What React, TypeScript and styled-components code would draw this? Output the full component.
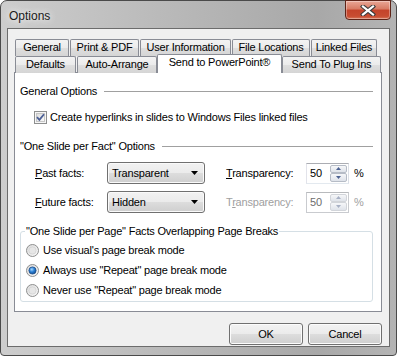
import React from 'react';
import styled, { createGlobalStyle } from 'styled-components';

const GlobalStyle = createGlobalStyle`
  html, body {
    margin: 0;
    padding: 0;
    background: #ffffff;
  }
  body {
    font-family: "Liberation Sans", Arial, sans-serif;
    font-size: 11px;
    letter-spacing: -0.2px;
    color: #000000;
  }
`;

const Window = styled.div`
  width: 397px;
  height: 356px;
  box-sizing: border-box;
  border: 1px solid #4a4a4a;
  border-radius: 7px 7px 4px 4px;
  background: linear-gradient(to right, #cdcdcd 0%, #bababa 40%, #a8a8a8 80%, #b4b4b4 100%);
  display: flex;
  flex-direction: column;
  padding: 0 6px 8px 6px;
`;

const TitleBar = styled.div`
  height: 27px;
  display: flex;
  justify-content: space-between;
  align-items: flex-start;
`;

const Title = styled.div`
  font-size: 12px;
  letter-spacing: 0;
  color: #1a1a1a;
  margin: 8px 0 0 2px;
  text-shadow: 0 0 6px rgba(255, 255, 255, 0.95), 0 0 12px rgba(255, 255, 255, 0.7);
`;

const CloseButton = styled.div`
  width: 46px;
  height: 20px;
  margin: -1px -1px 0 0;
  box-sizing: border-box;
  border: 1px solid #5e2418;
  border-radius: 0 0 4px 4px;
  background: linear-gradient(#e9a796 0%, #d77a63 45%, #c4432a 50%, #c84c31 85%, #d8785b 100%);
  box-shadow: inset 0 0 0 1px rgba(255, 255, 255, 0.35);
  display: flex;
  align-items: center;
  justify-content: center;
`;

const Client = styled.div`
  flex: 1;
  background: #f0f0f0;
  border: 1px solid #6c6c6c;
  padding: 10px 7px 0 6px;
  display: flex;
  flex-direction: column;
`;

const TabStrip = styled.div`
  display: flex;
  flex-direction: column;
  padding-left: 1px;
`;

const TabRow = styled.div<{ $h: number }>`
  display: flex;
  gap: 1px;
  height: ${p => p.$h}px;
`;

const Tab = styled.div<{ $w: number; $active?: boolean }>`
  width: ${p => p.$w}px;
  box-sizing: border-box;
  height: ${p => (p.$active ? 19 : 17)}px;
  margin: ${p => (p.$active ? '-2px -1px 0 -1px' : '0')};
  position: relative;
  z-index: ${p => (p.$active ? 2 : 0)};
  border: 1px solid #898c95;
  border-bottom: none;
  border-radius: 2px 2px 0 0;
  background: ${p =>
    p.$active ? '#ffffff' : 'linear-gradient(#f3f3f3 0%, #ebebeb 50%, #dedede 51%, #d5d5d5 100%)'};
  text-align: center;
  line-height: ${p => (p.$active ? 14 : 15)}px;
  white-space: nowrap;
`;

const Panel = styled.div`
  height: 240px;
  box-sizing: border-box;
  border: 1px solid #898c95;
  background: #ffffff;
  padding: 11px 8px 0 0;
  display: flex;
  flex-direction: column;
`;

const SectionHeader = styled.div<{ $top: number }>`
  display: flex;
  align-items: center;
  height: 14px;
  margin-top: ${p => p.$top}px;
  padding-left: 5px;
  white-space: nowrap;

  &::after {
    content: '';
    flex: 1;
    height: 1px;
    background: #a0a0a0;
    margin-left: 7px;
  }
`;

const CheckRow = styled.label`
  display: flex;
  align-items: center;
  gap: 3px;
  height: 14px;
  margin-top: 12px;
  padding-left: 19px;
`;

const FieldGrid = styled.div`
  display: grid;
  grid-template-columns: 72px 98px 101px 43px auto;
  grid-auto-rows: 22px;
  row-gap: 7px;
  align-items: center;
  margin-top: 9px;
  padding-left: 20px;
`;

const FieldLabel = styled.span<{ $gap?: number; $disabled?: boolean }>`
  margin-left: ${p => p.$gap || 0}px;
  color: ${p => (p.$disabled ? '#a0a0a0' : '#000000')};
  white-space: nowrap;
`;

const Select = styled.div`
  height: 22px;
  box-sizing: border-box;
  border: 1px solid #707070;
  border-radius: 3px;
  background: linear-gradient(#f2f2f2 0%, #ebebeb 49%, #dddddd 50%, #cfcfcf 100%);
  box-shadow: inset 0 0 0 1px #fafafa;
  display: flex;
  align-items: center;
  justify-content: space-between;
  padding: 0 6px 0 4px;
`;

const Spin = styled.div<{ $disabled?: boolean }>`
  height: 21px;
  box-sizing: border-box;
  border: 1px solid ${p => (p.$disabled ? '#c9cbcf' : '#abadb3')};
  border-top-color: ${p => (p.$disabled ? '#b8babd' : '#abadb3')};
  border-left-color: ${p => (p.$disabled ? '#c9cbcf' : '#e2e3ea')};
  border-right-color: ${p => (p.$disabled ? '#c9cbcf' : '#dbdfe6')};
  border-bottom-color: ${p => (p.$disabled ? '#c9cbcf' : '#e3e9ef')};
  background: #ffffff;
  display: flex;
  padding: 1px;
`;

const SpinValue = styled.span<{ $disabled?: boolean }>`
  flex: 1;
  padding-left: 2px;
  line-height: 17px;
  color: ${p => (p.$disabled ? '#6d6d6d' : '#000000')};
`;

const SpinButtons = styled.div`
  width: 17px;
  display: flex;
  flex-direction: column;
`;

const SpinButton = styled.div<{ $disabled?: boolean }>`
  flex: 1;
  border: 1px solid ${p => (p.$disabled ? '#d2d5da' : '#b6bcc6')};
  border-radius: 2px;
  background: linear-gradient(#f6f7f9, #dfe3ea);
  display: flex;
  align-items: center;
  justify-content: center;
`;

const Unit = styled.span<{ $disabled?: boolean }>`
  margin-left: 5px;
  color: ${p => (p.$disabled ? '#a0a0a0' : '#000000')};
`;

const Group = styled.fieldset`
  margin: 11px 0 0 5px;
  padding: 5px 0 4px 5px;
  border: 1px solid #d5dfe5;
  border-radius: 3px;
  min-width: 0;
`;

const Legend = styled.legend`
  padding: 0 1px;
  margin-left: -1px;
  line-height: 14px;
`;

const RadioList = styled.div`
  display: flex;
  flex-direction: column;
  gap: 6px;
`;

const RadioRow = styled.label`
  display: flex;
  align-items: center;
  gap: 4px;
  height: 14px;
`;

const ButtonRow = styled.div`
  display: flex;
  justify-content: flex-end;
  gap: 5px;
  margin-top: 11px;
`;

const Button = styled.div`
  width: 74px;
  height: 22px;
  box-sizing: border-box;
  border: 1px solid #707070;
  border-radius: 3px;
  background: linear-gradient(#f2f2f2 0%, #ebebeb 49%, #dddddd 50%, #cfcfcf 100%);
  box-shadow: inset 0 0 0 1px #fcfcfc;
  display: flex;
  align-items: center;
  justify-content: center;
`;

const CloseGlyph = () => (
  <svg width="16" height="11" viewBox="0 0 16 11">
    <path d="M3 1.5 L13 9.5 M13 1.5 L3 9.5" stroke="#3b3b3b" strokeWidth="4.2" strokeLinecap="square" />
    <path d="M3 1.5 L13 9.5 M13 1.5 L3 9.5" stroke="#ffffff" strokeWidth="2.2" strokeLinecap="square" />
  </svg>
);

const CheckBox = () => (
  <svg width="13" height="13" viewBox="0 0 13 13">
    <defs>
      <linearGradient id="cbFill" x1="0" y1="0" x2="1" y2="1">
        <stop offset="0" stopColor="#dcdcdc" />
        <stop offset="1" stopColor="#fbfbfb" />
      </linearGradient>
    </defs>
    <rect x="0.5" y="0.5" width="12" height="12" fill="#f6f6f6" stroke="#8e8f8f" />
    <rect x="2.5" y="2.5" width="8" height="8" fill="url(#cbFill)" stroke="#c6c6c6" />
    <path d="M3 6.2 L5.4 8.8 L10 3.2" fill="none" stroke="#4b5f96" strokeWidth="1.8" />
  </svg>
);

const Radio = ({ checked }: { checked?: boolean }) => (
  <svg width="13" height="13" viewBox="0 0 13 13">
    <defs>
      <linearGradient id="rdOuter" x1="0" y1="0" x2="1" y2="1">
        <stop offset="0" stopColor="#d9d9d9" />
        <stop offset="1" stopColor="#fafafa" />
      </linearGradient>
      <radialGradient id="rdDot" cx="0.4" cy="0.35" r="0.7">
        <stop offset="0" stopColor="#a6d8ff" />
        <stop offset="0.5" stopColor="#2a7fd4" />
        <stop offset="1" stopColor="#124c90" />
      </radialGradient>
    </defs>
    <circle cx="6.5" cy="6.5" r="6" fill="url(#rdOuter)" stroke="#8e8f8f" />
    <circle
      cx="6.5"
      cy="6.5"
      r="3.6"
      fill={checked ? 'url(#rdDot)' : '#e6e6e6'}
      stroke={checked ? '#1f4f8a' : '#d2d2d2'}
      strokeWidth="0.8"
    />
  </svg>
);

const DropArrow = () => (
  <svg width="7" height="4" viewBox="0 0 7 4">
    <path d="M0 0 H7 L3.5 4 Z" fill="#000000" />
  </svg>
);

const SpinArrow = ({ up, disabled }: { up?: boolean; disabled?: boolean }) => (
  <svg width="5" height="3" viewBox="0 0 5 3">
    <path d={up ? 'M0 3 L2.5 0 L5 3 Z' : 'M0 0 L5 0 L2.5 3 Z'} fill={disabled ? '#a7b0c4' : '#4d6291'} />
  </svg>
);

const SpinBox = ({ value, disabled }: { value: string; disabled?: boolean }) => (
  <Spin $disabled={disabled}>
    <SpinValue $disabled={disabled}>{value}</SpinValue>
    <SpinButtons>
      <SpinButton $disabled={disabled}>
        <SpinArrow up disabled={disabled} />
      </SpinButton>
      <SpinButton $disabled={disabled}>
        <SpinArrow disabled={disabled} />
      </SpinButton>
    </SpinButtons>
  </Spin>
);

const backTabs = [
  { label: 'General', w: 54 },
  { label: 'Print & PDF', w: 69 },
  { label: 'User Information', w: 91 },
  { label: 'File Locations', w: 78 },
  { label: 'Linked Files', w: 66 },
];

const frontTabs = [
  { label: 'Defaults', w: 61 },
  { label: 'Auto-Arrange', w: 80 },
  { label: 'Send to PowerPoint®', w: 125, active: true },
  { label: 'Send To Plug Ins', w: 99 },
];

const radios = [
  { label: "Use visual's page break mode", checked: false },
  { label: 'Always use "Repeat" page break mode', checked: true },
  { label: 'Never use "Repeat" page break mode', checked: false },
];

export default function App() {
  return (
    <>
      <GlobalStyle />
      <Window>
        <TitleBar>
          <Title>Options</Title>
          <CloseButton>
            <CloseGlyph />
          </CloseButton>
        </TitleBar>
        <Client>
          <TabStrip>
            <TabRow $h={17}>
              {backTabs.map(t => (
                <Tab key={t.label} $w={t.w}>
                  {t.label}
                </Tab>
              ))}
            </TabRow>
            <TabRow $h={16}>
              {frontTabs.map(t => (
                <Tab key={t.label} $w={t.w} $active={t.active}>
                  {t.label}
                </Tab>
              ))}
            </TabRow>
          </TabStrip>
          <Panel>
            <SectionHeader $top={0}>General Options</SectionHeader>
            <CheckRow>
              <CheckBox />
              Create hyperlinks in slides to Windows Files linked files
            </CheckRow>
            <SectionHeader $top={15}>"One Slide per Fact" Options</SectionHeader>
            <FieldGrid>
              <FieldLabel>
                <u>P</u>ast facts:
              </FieldLabel>
              <Select>
                Transparent
                <DropArrow />
              </Select>
              <FieldLabel $gap={21}>
                <u>T</u>ransparency:
              </FieldLabel>
              <SpinBox value="50" />
              <Unit>%</Unit>

              <FieldLabel>
                <u>F</u>uture facts:
              </FieldLabel>
              <Select>
                Hidden
                <DropArrow />
              </Select>
              <FieldLabel $gap={21} $disabled>
                T<u>r</u>ansparency:
              </FieldLabel>
              <SpinBox value="50" disabled />
              <Unit $disabled>%</Unit>
            </FieldGrid>
            <Group>
              <Legend>"One Slide per Page" Facts Overlapping Page Breaks</Legend>
              <RadioList>
                {radios.map(r => (
                  <RadioRow key={r.label}>
                    <Radio checked={r.checked} />
                    {r.label}
                  </RadioRow>
                ))}
              </RadioList>
            </Group>
          </Panel>
          <ButtonRow>
            <Button>OK</Button>
            <Button>Cancel</Button>
          </ButtonRow>
        </Client>
      </Window>
    </>
  );
}
